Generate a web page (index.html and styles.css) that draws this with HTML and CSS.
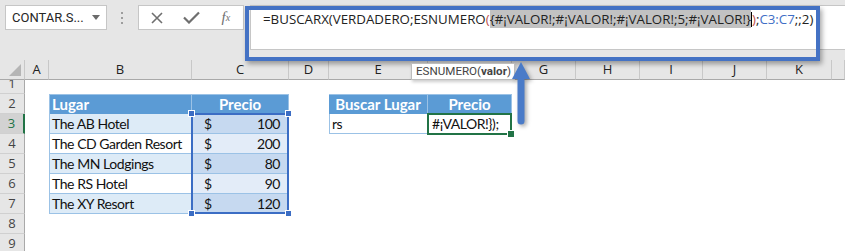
FILE: index.html
```html
<!DOCTYPE html>
<html lang="es">
<head>
<meta charset="UTF-8">
<title>BUSCARX ESNUMERO</title>
<link rel="stylesheet" href="styles.css">
</head>
<body>
  <div class="toolbar">
    <div class="namebox">
      <span>CONTAR.S...</span>
      <svg class="caret" width="8" height="5" viewBox="0 0 8 5"><path d="M0 0H8L4 5Z" fill="#6b6b6b"/></svg>
    </div>
    <div class="grip"><span></span><span></span><span></span></div>
    <div class="fxbuttons">
      <span class="fxbtn">
        <svg width="12" height="12" viewBox="0 0 12 12"><path d="M1 1L11 11M11 1L1 11" stroke="#6f6f6f" stroke-width="1.6"/></svg>
      </span>
      <span class="fxbtn">
        <svg width="17" height="13" viewBox="0 0 17 13"><path d="M1 6.5L6 11.5L16 1.5" stroke="#6f6f6f" stroke-width="2.2" fill="none"/></svg>
      </span>
      <span class="fxbtn fx"><i>f</i><sub>x</sub></span>
    </div>
    <div class="formula">=BUSCARX(VERDADERO;ESNUMERO<span class="paren">(</span><span class="sel">{#¡VALOR!;#¡VALOR!;#¡VALOR!;5;#¡VALOR!}</span><span class="cursor"></span><span class="paren">)</span>;<span class="ref">C3:C7</span>;;2)</div>
    <div class="focus-box"></div>
  </div>

  <div class="sheet">
    <div class="colhead corner"><span class="tri"></span></div>
    <div class="colhead">A</div>
    <div class="colhead">B</div>
    <div class="colhead">C</div>
    <div class="colhead">D</div>
    <div class="colhead">E</div>
    <div class="colhead">F</div>
    <div class="colhead">G</div>
    <div class="colhead">H</div>
    <div class="colhead">I</div>
    <div class="colhead">J</div>
    <div class="colhead">K</div>
    <div class="colhead"></div>

    <div class="rowhead row-1 first"><span>1</span></div>
    <div class="rowhead row-2">2</div>
    <div class="rowhead row-3 active">3</div>
    <div class="rowhead row-4">4</div>
    <div class="rowhead row-5">5</div>
    <div class="rowhead row-6">6</div>
    <div class="rowhead row-7">7</div>
    <div class="rowhead row-8">8</div>
    <div class="rowhead row-9">9</div>

    <!-- tabla de lugares -->
    <div class="th left col-b row-2">Lugar</div>
    <div class="th col-c row-2">Precio</div>

    <div class="td name band col-b row-3">The AB Hotel</div>
    <div class="td money band col-c row-3"><span>$</span><span>100</span></div>
    <div class="td name col-b row-4">The CD Garden Resort</div>
    <div class="td money col-c row-4"><span>$</span><span>200</span></div>
    <div class="td name band col-b row-5">The MN Lodgings</div>
    <div class="td money band col-c row-5"><span>$</span><span>80</span></div>
    <div class="td name col-b row-6">The RS Hotel</div>
    <div class="td money col-c row-6"><span>$</span><span>90</span></div>
    <div class="td name band col-b row-7">The XY Resort</div>
    <div class="td money band col-c row-7"><span>$</span><span>120</span></div>

    <div class="range">
      <span class="handle tl"></span><span class="handle tr"></span>
      <span class="handle bl"></span><span class="handle br"></span>
    </div>

    <!-- búsqueda -->
    <div class="th col-e row-2">Buscar Lugar</div>
    <div class="th last col-f row-2">Precio</div>
    <div class="td name col-e row-3">rs</div>
    <div class="td current col-f row-3">#¡VALOR!});</div>
  </div>

  <div class="tooltip">ESNUMERO(<b>valor</b>)</div>

  <svg class="arrow" width="28" height="74" viewBox="0 0 28 74">
    <path d="M13 4L22 21H16.5V63Q16.5 66.5 13 66.5Q9.5 66.5 9.5 63V21H4Z" fill="#4a7bc8"/>
  </svg>
</body>
</html>
```

FILE: styles.css
```css
* {
  box-sizing: border-box;
}
body {
  margin: 0;
  width: 845px;
  height: 251px;
  overflow: hidden;
  background-color: #fff;
  font-family: "Open Sans", sans-serif;
  position: relative;
}
.toolbar {
  height: 60px;
  background-color: #e6e6e6;
  display: flex;
  align-items: flex-start;
  padding-top: 5px;
  position: relative;
}
.namebox {
  margin-left: 5px;
  width: 102px;
  height: 25px;
  background-color: #fff;
  border: 1px solid #c6c6c6;
  display: flex;
  align-items: center;
  justify-content: space-between;
  padding: 0 6px 0 6px;
  font-family: Roboto, sans-serif;
  font-size: 13px;
  color: #262626;
}
.grip {
  margin-left: 13px;
  width: 4px;
  height: 25px;
  display: flex;
  flex-direction: column;
  justify-content: center;
  align-items: center;
  gap: 3px;
}
.grip span {
  width: 2px;
  height: 2px;
  background-color: #9d9d9d;
}
.fxbuttons {
  margin-left: 14px;
  width: 106px;
  height: 25px;
  background-color: #fff;
  border: 1px solid #c6c6c6;
  display: flex;
  align-items: center;
  padding-left: 1px;
}
.fxbtn {
  width: 35px;
  display: flex;
  justify-content: center;
  align-items: center;
}
.fx {
  font-family: "Liberation Serif", serif;
  font-size: 15px;
  color: #6f6f6f;
}
.fx sub {
  font-size: 10px;
  font-style: italic;
}
.formula {
  margin-left: 6px;
  flex: 1;
  height: 45px;
  background-color: #fff;
  border: 1px solid #c6c6c6;
  border-right: none;
  padding: 3px 0 0 12px;
  font-size: 13.3px;
  line-height: 20px;
  color: #222;
  white-space: nowrap;
}
.formula .paren {
  color: #c0504d;
}
.formula .sel {
  background-color: #c2c2c2;
}
.formula .ref {
  color: #3f6fc6;
}
.formula .cursor {
  display: inline-block;
  width: 1px;
  height: 15px;
  background-color: #000;
  vertical-align: -3px;
}
.focus-box {
  position: absolute;
  left: 245px;
  top: 6px;
  width: 575px;
  height: 55px;
  border: 4px solid #4472c4;
  box-shadow: 2px 3px 5px rgba(0, 0, 0, 0.35);
  z-index: 3;
}

/* hoja */
.sheet {
  display: grid;
  grid-template-columns: 25px 24px 143px 97px 40px 99px 84px 64px 64px 63px 64px 65px 13px;
  grid-template-rows: 20px 14px repeat(8, 20px);
}
.colhead {
  grid-row: 1;
  background-color: #e6e6e6;
  border-right: 1px solid #c8c8c8;
  border-bottom: 1px solid #a9a9a9;
  font-size: 13px;
  line-height: 19px;
  text-align: center;
  color: #222;
}
.corner {
  position: relative;
}
.tri {
  position: absolute;
  right: 3px;
  bottom: 3px;
  width: 0;
  height: 0;
  border-left: 12px solid transparent;
  border-bottom: 12px solid #b5b5b5;
}
.rowhead {
  grid-column: 1;
  background-color: #e6e6e6;
  border-right: 1px solid #a9a9a9;
  border-bottom: 1px solid #d0d0d0;
  font-size: 13px;
  line-height: 19px;
  text-align: center;
  color: #444;
}
.rowhead.first {
  overflow: hidden;
  display: flex;
  align-items: flex-end;
  justify-content: center;
}
.rowhead.first span {
  line-height: 19px;
}
.rowhead.active {
  background-color: #d2d2d2;
  color: #217346;
  border-right: 2px solid #217346;
}

.col-b { grid-column: 3; }
.col-c { grid-column: 4; }
.col-e { grid-column: 6; }
.col-f { grid-column: 7; }
.row-1 { grid-row: 2; }
.row-2 { grid-row: 3; }
.row-3 { grid-row: 4; }
.row-4 { grid-row: 5; }
.row-5 { grid-row: 6; }
.row-6 { grid-row: 7; }
.row-7 { grid-row: 8; }
.row-8 { grid-row: 9; }
.row-9 { grid-row: 10; }

.th,
.td {
  font-family: Lato, "Liberation Sans", sans-serif;
  font-size: 14px;
  letter-spacing: -0.45px;
  line-height: 19px;
  white-space: nowrap;
  overflow: hidden;
}
.th {
  background-color: #5b9bd5;
  color: #fff;
  font-weight: bold;
  font-size: 15px;
  text-align: center;
  letter-spacing: 0;
  border-top: 1px solid #9bc2e6;
  border-right: 1px solid #9bc2e6;
}
.th.left {
  text-align: left;
  padding-left: 2px;
  border-left: 1px solid #9bc2e6;
}
.td {
  color: #111;
  background-color: #fff;
  border-bottom: 1px solid #9bc2e6;
}
.td.band {
  background-color: #ddebf7;
}
.td.name {
  padding-left: 2px;
  border-left: 1px solid #9bc2e6;
}
.td.money {
  display: flex;
  justify-content: space-between;
  padding: 0 8px 0 12px;
  background-color: #e3ecf8;
  border-right: 1px solid #9bc2e6;
}
.td.money.band {
  background-color: #c6d9f0;
}
.range {
  grid-column: 4;
  grid-row: 4 / 9;
  margin-left: -1px;
  margin-top: -1px;
  border: 2px solid #3b6dc4;
  position: relative;
}
.handle {
  position: absolute;
  width: 7px;
  height: 7px;
  background-color: #3b6dc4;
  border: 1px solid #fff;
}
.handle.tl { left: -5px; top: -5px; }
.handle.tr { right: -5px; top: -5px; }
.handle.bl { left: -5px; bottom: -5px; }
.handle.br { right: -5px; bottom: -5px; }
.td.current {
  border: 2px solid #217346;
  margin: -1px 0 -1px -1px;
  padding-left: 3px;
  line-height: 18px;
  position: relative;
  overflow: visible;
}
.td.current::after {
  content: "";
  position: absolute;
  right: -4px;
  bottom: -4px;
  width: 6px;
  height: 6px;
  background-color: #217346;
  border-left: 1px solid #fff;
  border-top: 1px solid #fff;
}

.tooltip {
  position: absolute;
  left: 411px;
  top: 63px;
  width: 104px;
  height: 17px;
  background-color: #fff;
  border: 1px solid #bdbdbd;
  box-shadow: 1px 2px 3px rgba(0, 0, 0, 0.2);
  font-family: Roboto, sans-serif;
  font-size: 11.6px;
  line-height: 15px;
  padding-left: 4px;
  color: #444;
  white-space: nowrap;
  overflow: hidden;
  z-index: 4;
}
.arrow {
  position: absolute;
  left: 508px;
  top: 58px;
  z-index: 5;
  filter: drop-shadow(2px 2px 2px rgba(0, 0, 0, 0.35));
}
```
